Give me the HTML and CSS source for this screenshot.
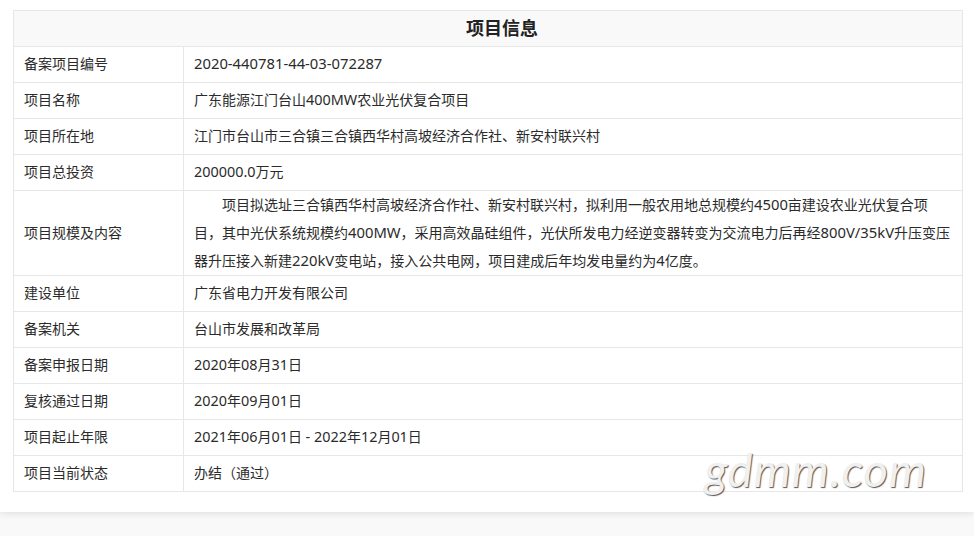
FILE: index.html
```html
<!DOCTYPE html>
<html lang="zh-CN">
<head>
<meta charset="utf-8">
<title>项目信息</title>
<link rel="stylesheet" href="styles.css">
</head>
<body>
<main class="panel">
<table class="info">
<colgroup><col class="col-label"><col></colgroup>
<thead><tr><th colspan="2" class="title">项目信息</th></tr></thead>
<tbody>
<tr><td>备案项目编号</td><td><span class="lat code">2020-440781-44-03-072287</span></td></tr>
<tr><td>项目名称</td><td>广东能源江门台山<span class="lat">400MW</span>农业光伏复合项目</td></tr>
<tr><td>项目所在地</td><td>江门市台山市三合镇三合镇西华村高坡经济合作社、新安村联兴村</td></tr>
<tr><td>项目总投资</td><td><span class="lat">200000.0</span>万元</td></tr>
<tr><td class="long">项目规模及内容</td><td class="long"><div class="desc"><div class="line first">项目拟选址三合镇西华村高坡经济合作社、新安村联兴村，拟利用一般农用地总规模约<span class="lat">4500</span>亩建设农业光伏复合项</div><div class="line">目，其中光伏系统规模约<span class="lat">400MW</span>，采用高效晶硅组件，光伏所发电力经逆变器转变为交流电力后再经<span class="lat">800V/35kV</span>升压变压</div><div class="line">器升压接入新建<span class="lat">220kV</span>变电站，接入公共电网，项目建成后年均发电量约为<span class="lat">4</span>亿度。</div></div></td></tr>
<tr><td>建设单位</td><td>广东省电力开发有限公司</td></tr>
<tr><td>备案机关</td><td>台山市发展和改革局</td></tr>
<tr><td>备案申报日期</td><td><span class="lat">2020</span>年<span class="lat">08</span>月<span class="lat">31</span>日</td></tr>
<tr><td>复核通过日期</td><td><span class="lat">2020</span>年<span class="lat">09</span>月<span class="lat">01</span>日</td></tr>
<tr><td>项目起止年限</td><td><span class="lat">2021</span>年<span class="lat">06</span>月<span class="lat">01</span>日<span class="lat"> - 2022</span>年<span class="lat">12</span>月<span class="lat">01</span>日</td></tr>
<tr><td>项目当前状态</td><td>办结（通过）</td></tr>
</tbody>
</table>
<div class="watermark">gdmm.com</div>
</main>
</body>
</html>
```
FILE: styles.css
```css
html, body {
  margin: 0;
  padding: 0;
  height: 536px;
  overflow: hidden;
  background: #f9f9f9;
}
body {
  font-family: "Noto Sans", "Noto Sans CJK SC", sans-serif;
  font-size: 14px;
  color: #2b2b2b;
}
.lat {
  font-size: 14.4px;
  line-height: 1;
}
.code, .desc .lat {
  font-size: 14.8px;
}
.panel {
  position: relative;
  box-sizing: border-box;
  width: 974px;
  height: 512px;
  padding: 10px 11px 0 13px;
  background: #fff;
  box-shadow: 0 1px 8px rgba(0, 0, 0, 0.12);
}
.info {
  width: 950px;
  border-collapse: collapse;
  table-layout: fixed;
}
.col-label { width: 170px; }
.info th, .info td {
  border: 1px solid #e7e7e7;
  padding: 0 10px 2px;
  height: 33px;
  box-sizing: content-box;
  text-align: left;
  font-weight: normal;
  line-height: 20px;
}
.info .title {
  background: #f9f9f9;
  padding-left: 38px;
  text-align: center;
  font-size: 18px;
  font-weight: bold;
  color: #222;
}
.info .long { height: 84px; padding-bottom: 0; }
.desc {
  line-height: 28px;
}
.line {
  white-space: nowrap;
}
.first {
  text-indent: 2em;
}
.watermark {
  position: absolute;
  right: 47px;
  top: 439px;
  font-family: Lato, sans-serif;
  font-style: italic;
  font-weight: 400;
  font-size: 47px;
  line-height: 60px;
  letter-spacing: 1px;
  color: #f0f0f0;
  text-shadow: 1px 1px 1px #555;
}
```
